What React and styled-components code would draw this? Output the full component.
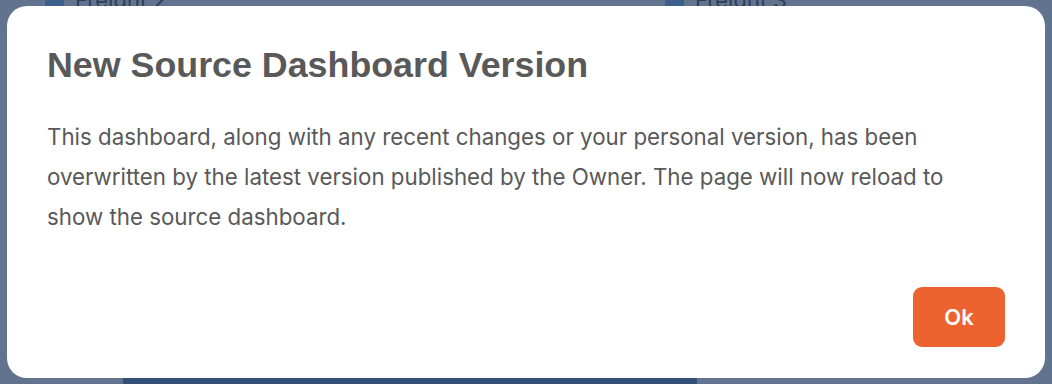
import React from "react";
import styled, { createGlobalStyle } from "styled-components";

const GlobalStyle = createGlobalStyle`
  html, body {
    margin: 0;
    padding: 0;
    width: 1052px;
    height: 384px;
    overflow: hidden;
    background: #62738f;
  }
`;

const Page = styled.div`
  position: relative;
  width: 1052px;
  height: 384px;
  overflow: hidden;
  background: #62738f;
  font-family: Inter, "Liberation Sans", sans-serif;
`;

const Dashboard = styled.div`
  display: flex;
  flex-direction: column;
  justify-content: space-between;
  height: 100%;
`;

const LegendRow = styled.div`
  display: flex;
  padding-left: 45px;
  margin-top: -13px;
`;

const LegendItem = styled.div`
  display: flex;
  flex-shrink: 0;
  align-items: center;
  gap: 11px;
  width: 620px;
  font-family: Inter, sans-serif;
  font-size: 22px;
  color: #2f3d57;
`;

const Swatch = styled.span`
  width: 19px;
  height: 19px;
  background: #3d5f8e;
`;

const BottomBar = styled.div`
  margin-left: 123px;
  width: 574px;
  height: 8px;
  background: #33507a;
`;

const Dialog = styled.div`
  position: absolute;
  left: 7px;
  top: 6px;
  width: 1038px;
  height: 372px;
  box-sizing: border-box;
  background: #ffffff;
  border-radius: 20px;
  padding: 39px 40px 31px 40px;
  display: flex;
  flex-direction: column;
`;

const Title = styled.h2`
  margin: 0;
  font-family: "Liberation Sans", Arial, sans-serif;
  font-weight: 700;
  font-size: 35.8px;
  line-height: 40px;
  color: #595959;
`;

const Body = styled.p`
  margin: 32px 0 0 0;
  max-width: 930px;
  font-family: Inter, sans-serif;
  font-size: 22.3px;
  line-height: 40px;
  color: #595959;
`;

const Footer = styled.div`
  margin-top: auto;
  display: flex;
  justify-content: flex-end;
`;

const OkButton = styled.button`
  width: 92px;
  height: 60px;
  border: none;
  border-radius: 9px;
  background: #ec632f;
  color: #ffffff;
  font-family: Inter, sans-serif;
  font-weight: 600;
  font-size: 22px;
  cursor: pointer;
`;

export default function App() {
  return (
    <Page>
      <GlobalStyle />
      <Dashboard>
        <LegendRow>
          <LegendItem>
            <Swatch />
            Freight 2
          </LegendItem>
          <LegendItem>
            <Swatch />
            Freight 3
          </LegendItem>
        </LegendRow>
        <BottomBar />
      </Dashboard>
      <Dialog>
        <Title>New Source Dashboard Version</Title>
        <Body>
          This dashboard, along with any recent changes or your personal version, has been
          overwritten by the latest version published by the Owner. The page will now reload to
          show the source dashboard.
        </Body>
        <Footer>
          <OkButton>Ok</OkButton>
        </Footer>
      </Dialog>
    </Page>
  );
}
